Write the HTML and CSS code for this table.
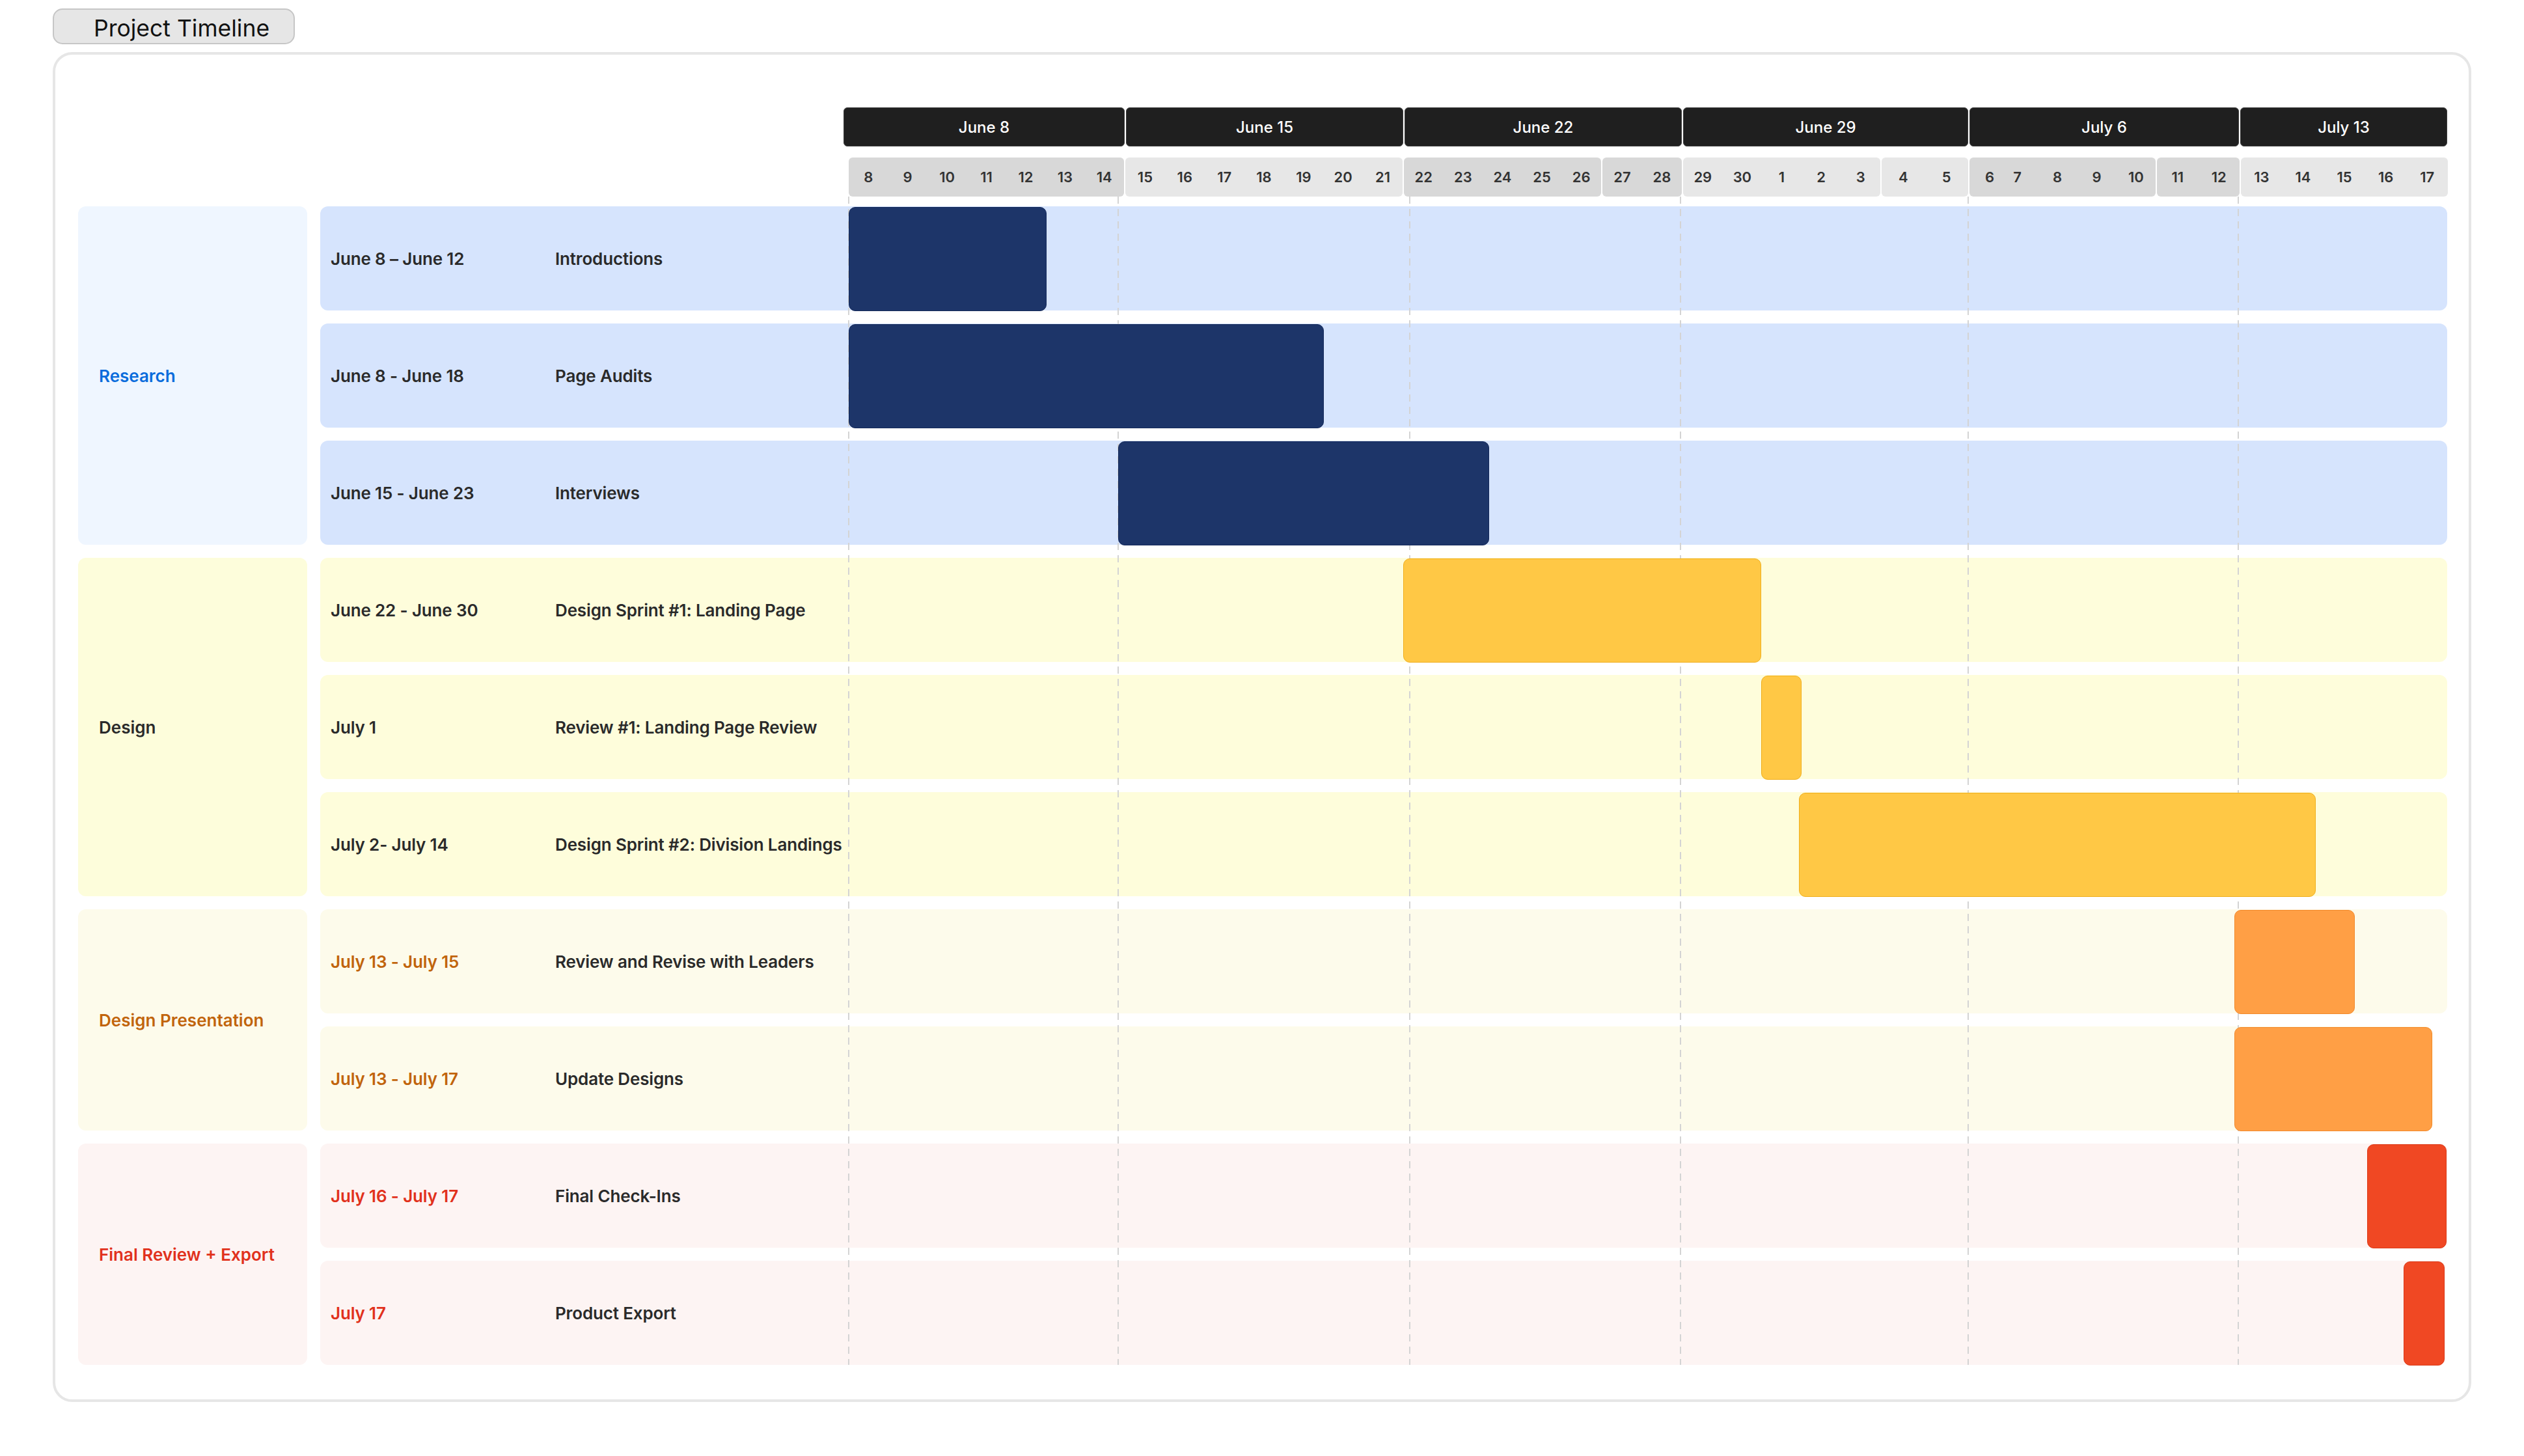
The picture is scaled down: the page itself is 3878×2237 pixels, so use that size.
FILE: index.html
```html
<!DOCTYPE html>
<html lang="en">
<head>
<meta charset="utf-8">
<title>Project Timeline</title>
<link rel="stylesheet" href="styles.css">
</head>
<body>
<div class="page">
  <div class="title-btn">Project Timeline</div>
  <div class="card">
    <div class="weeks">
      <div class="week">June 8</div>
      <div class="week">June 15</div>
      <div class="week">June 22</div>
      <div class="week">June 29</div>
      <div class="week">July 6</div>
      <div class="week">July 13</div>
    </div>
    <div class="days">
      <div class="seg dark"><span>8</span><span>9</span><span>10</span><span>11</span><span>12</span><span>13</span><span>14</span></div>
      <div class="seg light"><span>15</span><span>16</span><span>17</span><span>18</span><span>19</span><span>20</span><span>21</span></div>
      <div class="seg dark"><span>22</span><span>23</span><span>24</span><span>25</span><span>26</span></div>
      <div class="seg dark"><span>27</span><span>28</span></div>
      <div class="seg light"><span>29</span><span>30</span><span>1</span><span>2</span><span>3</span></div>
      <div class="seg light"><span>4</span><span>5</span></div>
      <div class="seg dark"><span class="narrow">6</span><span class="mid">7</span><span>8</span><span>9</span><span>10</span></div>
      <div class="seg dark"><span>11</span><span>12</span></div>
      <div class="seg light"><span>13</span><span>14</span><span>15</span><span>16</span><span>17</span></div>
    </div>

    <div class="chart-body">
      <div class="group research g1">Research</div>
      <div class="group design g2">Design</div>
      <div class="group present g3">Design Presentation</div>
      <div class="group final g4">Final Review + Export</div>

      <div class="row research">
        <div class="label"><span class="date">June 8 – June 12</span><span class="name">Introductions</span></div>
        <div class="track"><div class="bar navy" style="left:0px;width:304px"></div></div>
      </div>
      <div class="row research">
        <div class="label"><span class="date">June 8 - June 18</span><span class="name">Page Audits</span></div>
        <div class="track"><div class="bar navy" style="left:0px;width:730px"></div></div>
      </div>
      <div class="row research">
        <div class="label"><span class="date">June 15 - June 23</span><span class="name">Interviews</span></div>
        <div class="track"><div class="bar navy" style="left:414px;width:570px"></div></div>
      </div>

      <div class="row design">
        <div class="label"><span class="date">June 22 - June 30</span><span class="name">Design Sprint #1: Landing Page</span></div>
        <div class="track"><div class="bar yellow" style="left:852px;width:550px"></div></div>
      </div>
      <div class="row design">
        <div class="label"><span class="date">July 1</span><span class="name">Review #1: Landing Page Review</span></div>
        <div class="track"><div class="bar yellow" style="left:1402px;width:62px"></div></div>
      </div>
      <div class="row design">
        <div class="label"><span class="date">July 2- July 14</span><span class="name">Design Sprint #2: Division Landings</span></div>
        <div class="track"><div class="bar yellow" style="left:1460px;width:794px"></div></div>
      </div>

      <div class="row present">
        <div class="label"><span class="date">July 13 - July 15</span><span class="name">Review and Revise with Leaders</span></div>
        <div class="track"><div class="bar orange" style="left:2129px;width:185px"></div></div>
      </div>
      <div class="row present" style="margin-right:22px">
        <div class="label"><span class="date">July 13 - July 17</span><span class="name">Update Designs</span></div>
        <div class="track"><div class="bar orange" style="left:2129px;width:304px"></div></div>
      </div>

      <div class="row final">
        <div class="label"><span class="date">July 16 - July 17</span><span class="name">Final Check-Ins</span></div>
        <div class="track"><div class="bar red" style="left:2333px;width:122px"></div></div>
      </div>
      <div class="row final" style="margin-right:3px">
        <div class="label"><span class="date">July 17</span><span class="name">Product Export</span></div>
        <div class="track"><div class="bar red" style="left:2389px;width:63px"></div></div>
      </div>

      <div class="gridlines">
        <i class="vline" style="left:0px"></i>
        <i class="vline" style="left:414px"></i>
        <i class="vline" style="left:862px"></i>
        <i class="vline" style="left:1278px"></i>
        <i class="vline" style="left:1720px"></i>
        <i class="vline" style="left:2135px"></i>
      </div>
    </div>
  </div>
</div>
</body>
</html>
```

FILE: styles.css
```css
* { box-sizing: border-box; }

html, body {
  margin: 0;
  background: #ffffff;
}

body {
  font-family: Inter, "Noto Sans", sans-serif;
  color: #2a2a2a;
}

.page {
  padding: 13px 81px 0 81px;
}

.title-btn {
  display: inline-flex;
  align-items: center;
  height: 55px;
  padding: 6px 37px 0 61px;
  background: #e6e6e6;
  border: 2px solid #c6c6c6;
  border-radius: 15px;
  font-size: 35.5px;
  font-weight: 400;
  color: #111111;
}

.card {
  margin-top: 12px;
  border: 4px solid #e6e6e6;
  border-radius: 30px;
  padding: 81px 33px 53px 35px;
}

/* week header */
.weeks {
  display: grid;
  grid-template-columns: 432px 426px 426px 438px 414px 318px;
  column-gap: 2px;
  margin-left: 1176px;
  height: 60px;
}

.week {
  display: flex;
  align-items: center;
  justify-content: center;
  background: #1f1f1f;
  border: 1px solid #3e3e3e;
  border-radius: 6px;
  color: #ffffff;
  font-size: 24px;
  font-weight: 500;
}

/* day header */
.days {
  display: grid;
  grid-template-columns: 423px 426px 303px 122px 303px 133px 286px 127px 318px;
  column-gap: 2px;
  margin-left: 1184px;
  margin-top: 17px;
  height: 60px;
}

.seg {
  display: flex;
  border-radius: 6px;
}

.seg.dark { background: #d8d8d8; }
.seg.light { background: #e7e7e7; }

.seg span {
  flex: 1;
  display: flex;
  align-items: center;
  justify-content: center;
  font-size: 22px;
  font-weight: 600;
  color: #333333;
}

.seg span.narrow {
  flex: 0 0 42px;
  justify-content: flex-end;
  padding-right: 4px;
}

.seg span.mid {
  flex: 0 0 63px;
}

/* body */
.chart-body {
  position: relative;
  display: grid;
  grid-template-columns: 352px 1fr;
  grid-template-rows: repeat(10, 160px);
  row-gap: 20px;
  column-gap: 20px;
  margin-top: 15px;
}

.group {
  grid-column: 1;
  display: flex;
  align-items: center;
  padding-left: 32px;
  border-radius: 12px;
  font-size: 26px;
  font-weight: 600;
}

.g1 { grid-row: 1 / span 3; }
.g2 { grid-row: 4 / span 3; }
.g3 { grid-row: 7 / span 2; }
.g4 { grid-row: 9 / span 2; }

.group.research { background: #eff6ff; color: #0a6cdc; }
.group.design { background: #fdfddb; color: #2a2a2a; }
.group.present { background: #fdfbeb; color: #c1640b; }
.group.final { background: #fdf4f3; color: #e1311c; }

.row {
  grid-column: 2;
  display: flex;
  border-radius: 12px;
  font-size: 26px;
  font-weight: 600;
  letter-spacing: -0.15px;
}

.row.research { background: #d6e4fd; }
.row.design { background: #fefddb; }
.row.present { background: #fdfbeb; }
.row.final { background: #fdf4f3; }

.label {
  flex: 0 0 812px;
  display: flex;
  align-items: center;
  padding-left: 16px;
}

.date {
  flex: 0 0 345px;
  white-space: nowrap;
}

.name {
  white-space: nowrap;
  color: #2a2a2a;
}

.row.present .date { color: #c1640b; }
.row.final .date { color: #e1311c; }

.track {
  position: relative;
  flex: 1;
}

.bar {
  position: absolute;
  top: 1px;
  bottom: -1px;
  border-radius: 10px;
  z-index: 2;
}

.bar.navy { background: #1d3569; border: 1px solid #14295a; }
.bar.yellow { background: #ffc845; border: 1px solid #f0ae1c; }
.bar.orange { background: #ff9f45; border: 1px solid #f2892b; }
.bar.red { background: #f04823; border: 1px solid #db3917; }

/* dashed week lines */
.gridlines {
  position: absolute;
  left: 1184px;
  top: -15px;
  bottom: 0;
  width: 2455px;
  z-index: 1;
  pointer-events: none;
}

.vline {
  position: absolute;
  top: 0;
  bottom: 0;
  width: 2px;
  margin-left: -1px;
  background-image: repeating-linear-gradient(to bottom, #d4d4d4 0 11px, transparent 11px 19px);
}
```
